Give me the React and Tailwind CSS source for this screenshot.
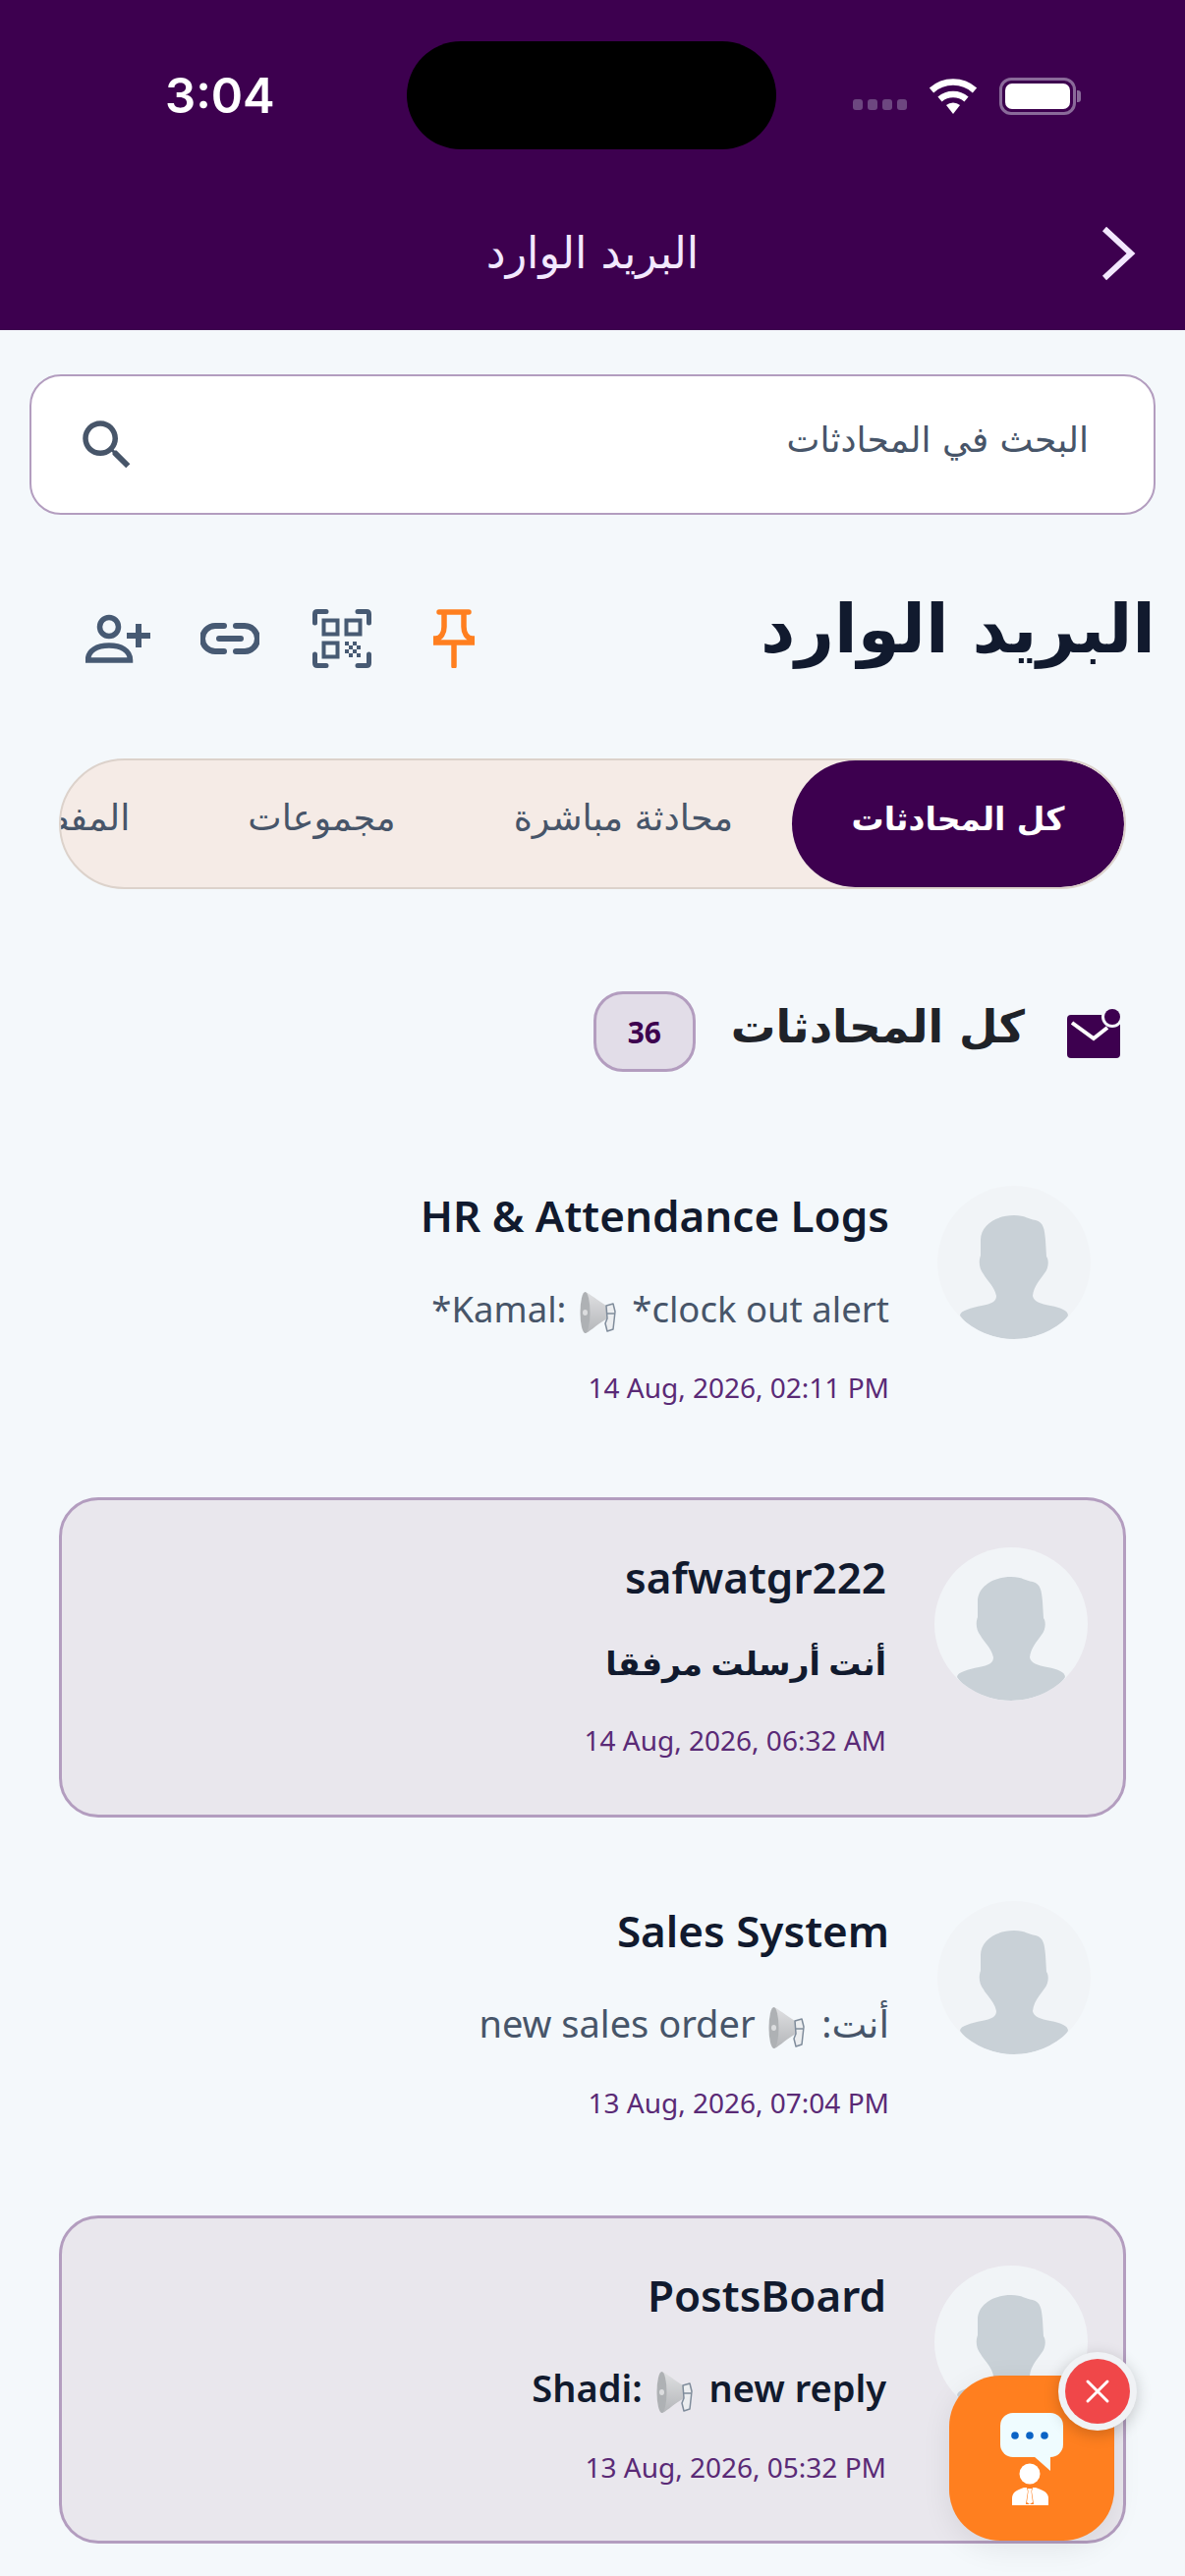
import React from 'react';

const latin = "font-['Noto_Sans','DejaVu_Sans',sans-serif]";

const Megaphone = () => (
  <svg width="40" height="42" viewBox="0 0 40 42" className="inline-block align-middle mx-[4px]">
    <defs>
      <linearGradient id="horn" x1="0" y1="0" x2="0" y2="1">
        <stop offset="0" stopColor="#dfe0e2" />
        <stop offset="1" stopColor="#b4b6b9" />
      </linearGradient>
    </defs>
    <path d="M5 0 C8 0 13 5 27 14 L28 27 C16 34 9 42 5 42 Z" fill="url(#horn)" />
    <ellipse cx="5.5" cy="21" rx="5" ry="21" fill="#aeb1b4" />
    <ellipse cx="5.5" cy="21" rx="2.5" ry="3" fill="#dcdddf" />
    <path d="M27 14 L34 12 L36 20 L34 38 L28 40 L26 32 L28 27 Z" fill="#eceef0" stroke="#7f8c9b" strokeWidth="1.5" strokeLinejoin="round" />
    <path d="M28 22 H35" stroke="#7f8c9b" strokeWidth="1.5" />
  </svg>
);

const Silhouette = () => (
  <div className="w-[156px] h-[156px] rounded-full overflow-hidden shrink-0 bg-[#f1f4f7]">
    <svg width="156" height="156" viewBox="0 0 156 156">
      <path
        d="M78 30 C90 30 92 34 100 35 C108 37 109 44 110 55 L111 72 C114 76 113 84 109 89 C105 95 98 102 97 112 C98 118 105 120 115 122 C126 124 133 127 133 132 C125 145 102 156 78 156 C54 156 31 145 23 132 C23 127 35 124 45 122 C55 120 60 118 60 112 C58 102 50 96 47 90 C42 84 42 76 44 71 L44 55 C44 40 60 30 78 30 Z"
        fill="#c9d1d7"
      />
    </svg>
  </div>
);

const Row = ({ active, tall, mt, name, msg, date }) => (
  <div
    className={`flex items-start gap-[49px] rounded-[40px] border-[3px] pt-[48px] ${mt} ${
      active ? 'border-[#b39dbf] bg-[#e9e7ed] pr-[36px]' : 'border-transparent pr-[33px]'
    } ${tall ? 'pb-[53px]' : 'pb-[54px]'}`}
  >
    <Silhouette />
    <div className={`flex flex-col flex-1 min-w-0 ${latin}`}>
      <div className="h-[60px] leading-[60px] text-[44px] font-semibold text-[#111a2e]">{name}</div>
      <div
        className={`whitespace-nowrap ${
          tall ? 'h-[68px] leading-[68px] mt-[30px]' : 'h-[58px] leading-[58px] mt-[26px]'
        } ${active ? 'text-[38px] font-semibold text-[#111a2e]' : 'text-[38px] text-[#475569]'}`}
      >
        {msg}
      </div>
      <div className={`h-[44px] leading-[44px] text-[28px] text-[#5a2a76] ${tall ? 'mt-[25px]' : 'mt-[30px]'}`}>
        <span dir="ltr" className="inline-block">{date}</span>
      </div>
    </div>
  </div>
);

const Fab = () => (
  <div className="absolute bottom-[36px] right-[72px] w-[168px] h-[168px] rounded-[52px] bg-[#ff7f1f] shadow-[0_8px_30px_rgba(0,0,0,0.08)]">
    <svg width="168" height="168" viewBox="0 0 168 168">
      <rect x="52" y="38" width="64" height="45" rx="13" fill="#effcff" />
      <path d="M86 82 L103 97 L103 80 Z" fill="#effcff" />
      <circle cx="67" cy="61" r="3.8" fill="#0b63c5" />
      <circle cx="82" cy="61" r="3.8" fill="#0b63c5" />
      <circle cx="97" cy="61" r="3.8" fill="#0b63c5" />
      <circle cx="82" cy="100" r="10.5" fill="#fff" />
      <path d="M64 132 L64 125 C64 119 68 117 76 114 L88 114 C96 117 101 119 101 125 L101 132 Z" fill="#fff" />
      <path d="M79 114 L85 114 L84 118 L86 131 L78 131 L80 118 Z" fill="#ff7f1f" />
      <path d="M80 115 L84 115 L83.5 118 L85 129 L82 131 L79 129 L80.5 118 Z" fill="#fff" />
    </svg>
    <button className="absolute -top-[24px] -right-[23px] w-[80px] h-[80px] rounded-full bg-[#f0f2f5] flex items-center justify-center shadow-[0_4px_16px_rgba(0,0,0,0.2)]">
      <span className="w-[66px] h-[66px] rounded-full bg-[#f04749] flex items-center justify-center">
        <svg width="26" height="26" viewBox="0 0 26 26">
          <path d="M3 3 L23 23 M23 3 L3 23" stroke="#fff" strokeWidth="3" strokeLinecap="round" />
        </svg>
      </span>
    </button>
  </div>
);

const tabs = ['محادثة مباشرة', 'مجموعات', 'المفضلة'];

export default function App() {
  return (
    <div dir="rtl" className="relative w-[1206px] h-[2622px] overflow-hidden bg-[#f4f8fb] font-['DejaVu_Sans',sans-serif]">
      {/* header */}
      <div className="relative h-[336px] bg-[#3d004f]">
        <div className="absolute top-[42px] left-[414px] w-[376px] h-[110px] rounded-[55px] bg-black" />
        <div dir="ltr" className="flex items-center h-[195px] pl-[168px] pr-[106px]">
          <span className="font-['Inter',sans-serif] font-semibold text-[49px] text-white leading-none">3:04</span>
          <div className="ml-auto flex items-center">
            <div className="flex gap-[5px] mt-[18px]">
              <i className="w-[10px] h-[11px] rounded-[3px] bg-[#6d4780]" />
              <i className="w-[10px] h-[11px] rounded-[3px] bg-[#6d4780]" />
              <i className="w-[10px] h-[11px] rounded-[3px] bg-[#6d4780]" />
              <i className="w-[10px] h-[11px] rounded-[3px] bg-[#6d4780]" />
            </div>
            <svg width="50" height="38" viewBox="0 0 50 38" className="ml-[22px]">
              <path d="M3 13 A33 33 0 0 1 47 13" fill="none" stroke="#fff" strokeWidth="6.5" />
              <path d="M11.5 22 A21 21 0 0 1 38.5 22" fill="none" stroke="#fff" strokeWidth="6.5" />
              <path d="M18 28 A11 11 0 0 1 32 28 L25 37 Z" fill="#fff" />
            </svg>
            <div className="ml-[22px] flex items-center">
              <div className="w-[78px] h-[38px] rounded-[12px] border-[3px] border-[#8a6a9a] p-[3px]">
                <div className="w-full h-full rounded-[7px] bg-white" />
              </div>
              <div className="ml-[1px] w-[4px] h-[12px] rounded-r-[3px] bg-[#8a6a9a]" />
            </div>
          </div>
        </div>
        <div className="grid grid-cols-[1fr_auto_1fr] items-center h-[126px] px-[50px]">
          <svg width="36" height="56" viewBox="0 0 36 56" className="justify-self-start">
            <path d="M4 3 L31 28 L4 53" fill="none" stroke="#f3e8ff" strokeWidth="6" />
          </svg>
          <span className="text-[44.5px] text-[#f3e8ff]">البريد الوارد</span>
          <span />
        </div>
      </div>

      <div className="px-[30px]">
        {/* search */}
        <div className="mt-[45px] flex items-center justify-between h-[143px] rounded-[32px] border-2 border-[#b39dbf] bg-white pr-[66px] pl-[44px]">
          <span className="text-[36px] text-[#475569] -mt-[10px]">البحث في المحادثات</span>
          <svg width="66" height="66" viewBox="0 0 24 24" fill="#475569">
            <path d="M15.5 14h-.79l-.28-.27C15.41 12.59 16 11.11 16 9.5 16 5.91 13.09 3 9.5 3S3 5.91 3 9.5 5.91 16 9.5 16c1.61 0 3.09-.59 4.23-1.57l.27.28v.79l5 4.99L20.49 19l-4.99-5zm-6 0C7.01 14 5 11.99 5 9.5S7.01 5 9.5 5 14 7.01 14 9.5 11.99 14 9.5 14z" />
          </svg>
        </div>

        {/* title row */}
        <div className="mt-[66px] flex items-center justify-between h-[100px] pl-[57px]">
          <h1 className="text-[69px] font-bold text-[#111a2e] leading-none">البريد الوارد</h1>
          <div dir="ltr" className="flex items-center mt-[20px]">
            <svg width="66" height="50" viewBox="0 0 66 50">
              <circle cx="24" cy="13" r="9.5" fill="none" stroke="#475a73" strokeWidth="5.5" />
              <path d="M2.5 47 C2.5 37 12 32 24 32 C36 32 45.5 37 45.5 47 Z" fill="none" stroke="#475a73" strokeWidth="5.5" />
              <path d="M42 22 H66 M54 10 V34" stroke="#475a73" strokeWidth="6" />
            </svg>
            <svg width="60" height="32" viewBox="0 0 60 32" className="ml-[51px]">
              <path d="M24 3 H15 A13 13 0 0 0 15 29 H24 M36 3 H45 A13 13 0 0 1 45 29 H36 M19 16 H41" fill="none" stroke="#475a73" strokeWidth="6" strokeLinecap="round" />
            </svg>
            <svg width="60" height="60" viewBox="0 0 60 60" className="ml-[54px]">
              <path d="M2.5 14 V5 Q2.5 2.5 5 2.5 H14 M46 2.5 H55 Q57.5 2.5 57.5 5 V14 M2.5 46 V55 Q2.5 57.5 5 57.5 H14 M46 57.5 H55 Q57.5 57.5 57.5 55 V46" fill="none" stroke="#475a73" strokeWidth="5" strokeLinecap="round" />
              <path d="M11.5 11.5 H25.5 V25.5 H11.5 Z M34.5 11.5 H48.5 V25.5 H34.5 Z M11.5 34.5 H25.5 V48.5 H11.5 Z" fill="none" stroke="#475a73" strokeWidth="4" />
              <path d="M33 33 H37 V37 H33 Z M41 33 H45 V37 H41 Z M37 37 H41 V41 H37 Z M45 37 H49 V41 H45 Z M33 41 H37 V45 H33 Z M41 41 H45 V45 H41 Z M37 45 H41 V49 H37 Z M45 45 H49 V49 H45 Z" fill="#475a73" />
            </svg>
            <svg width="42" height="60" viewBox="0 0 42 60" className="ml-[63px]">
              <path d="M6 3 H36 M11 3 V18 C11 24 8 30 2 30 V34 H40 V30 C34 30 31 24 31 18 V3 M21 34 V58" fill="none" stroke="#ff7f1f" strokeWidth="5.5" strokeLinecap="round" />
            </svg>
          </div>
        </div>

        {/* tabs */}
        <div className="mx-[30px] mt-[82px] h-[133px] rounded-full border-2 border-[#dcd2cb] bg-[#f5ebe6] overflow-hidden flex items-center">
          <div className="h-[129px] w-[338px] shrink-0 rounded-full bg-[#3d004f] flex items-center justify-center text-white font-bold text-[33px] pb-[10px]">
            كل المحادثات
          </div>
          {tabs.map((t) => (
            <div key={t} className="shrink-0 px-[60px] text-[#475569] text-[36.5px] whitespace-nowrap pb-[10px]">
              {t}
            </div>
          ))}
        </div>

        {/* section title */}
        <div className="mx-[30px] mt-[104px] h-[82px] flex items-center gap-[36px] pr-[6px]">
          <svg width="54" height="54" viewBox="0 0 54 54" className="shrink-0 ml-[7px]">
            <rect x="0" y="10" width="54" height="44" rx="4" fill="#3d004f" />
            <path d="M5 18 L27 34 L41 23" fill="none" stroke="#fff" strokeWidth="4" />
            <circle cx="46" cy="12" r="11" fill="#f4f8fb" />
            <circle cx="46" cy="12" r="8" fill="#3d004f" />
          </svg>
          <span className="text-[45.5px] font-bold text-[#1f2329] leading-none -mt-[8px]">كل المحادثات</span>
          <span className={`w-[104px] h-[82px] rounded-[30px] border-[3px] border-[#b39dbf] bg-[#e2dde8] flex items-center justify-center text-[30px] font-bold text-[#3d004f] ${latin}`}>
            36
          </span>
        </div>

        {/* rows */}
        <div className="mx-[30px]">
          <Row
            mt="mt-[65px]"
            tall
            name="HR & Attendance Logs"
            msg={<span dir="ltr" className="inline-block text-[36.5px]">*Kamal: <Megaphone /> *clock out alert</span>}
            date="14 Aug, 2026, 02:11 PM"
          />
          <Row
            active
            mt="mt-[34px]"
            name="safwatgr222"
            msg={<span className="text-[33px]">أنت أرسلت مرفقا</span>}
            date="14 Aug, 2026, 06:32 AM"
          />
          <Row
            mt="mt-[34px]"
            tall
            name="Sales System"
            msg={<>أنت: <Megaphone /> new sales order</>}
            date="13 Aug, 2026, 07:04 PM"
          />
          <Row
            active
            tall
            mt="mt-[37px]"
            name="PostsBoard"
            msg={<span dir="ltr" className="inline-block">Shadi: <Megaphone /> new reply</span>}
            date="13 Aug, 2026, 05:32 PM"
          />
        </div>
      </div>

      <Fab />
    </div>
  );
}
